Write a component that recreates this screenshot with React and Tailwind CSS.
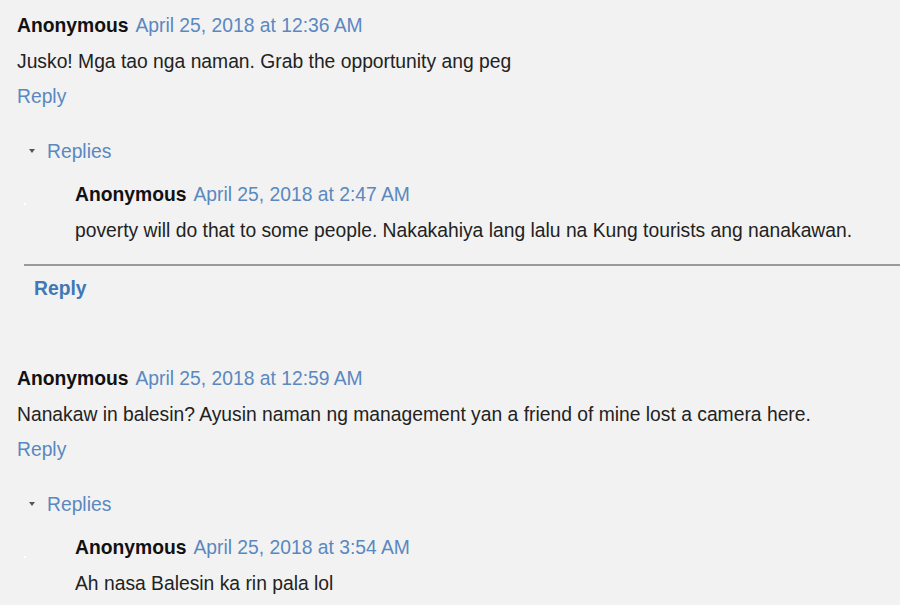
import React from 'react'

const Header = ({ date }) => (
  <div className="leading-[24px] whitespace-nowrap">
    <span className="font-bold text-[#111]">Anonymous</span>
    <span className="ml-[7px] text-[#5a88c0]">{date}</span>
  </div>
)

const Nested = ({ date, text }) => (
  <div className="mt-[19px] flex">
    <div className="w-[58px] pl-[7px] pt-[20px] shrink-0">
      <div className="w-[2px] h-[2px] bg-white"></div>
    </div>
    <div>
      <Header date={date} />
      <div className="mt-[12px] leading-[24px] text-[#222] whitespace-nowrap">{text}</div>
    </div>
  </div>
)

const Replies = () => (
  <div className="mt-[31px] ml-[12px] flex items-center leading-[24px]">
    <div className="w-0 h-0 border-l-[3.5px] border-r-[3.5px] border-t-[4px] border-l-transparent border-r-transparent border-t-[#555] mr-[12px] -mt-[3px]"></div>
    <span className="text-[#5a88c0]">Replies</span>
  </div>
)

const Thread = ({ date, text, nested }) => (
  <div>
    <Header date={date} />
    <div className="mt-[12px] leading-[24px] text-[#222] whitespace-nowrap">{text}</div>
    <div className="mt-[11px] leading-[24px] text-[#5a88c0]">Reply</div>
    <Replies />
    {nested}
  </div>
)

export default function App() {
  return (
    <div
      className="w-[900px] h-[605px] overflow-hidden bg-[#f2f2f2] pl-[17px] pt-[14px] text-[19.3px]"
      style={{ fontFamily: '"Liberation Sans", Arial, sans-serif' }}
    >
      <Thread
        date="April 25, 2018 at 12:36 AM"
        text="Jusko! Mga tao nga naman. Grab the opportunity ang peg"
        nested={
          <>
            <Nested
              date="April 25, 2018 at 2:47 AM"
              text="poverty will do that to some people. Nakakahiya lang lalu na Kung tourists ang nanakawan."
            />
            <div className="mt-[21px] ml-[7px] border-t-2 border-[#9a9a9a]"></div>
            <div className="mt-[11px] ml-[17px] leading-[24px] font-bold text-[#3f78b4]">Reply</div>
          </>
        }
      />
      <div className="mt-[66px]">
        <Thread
          date="April 25, 2018 at 12:59 AM"
          text="Nanakaw in balesin? Ayusin naman ng management yan a friend of mine lost a camera here."
          nested={
            <Nested date="April 25, 2018 at 3:54 AM" text="Ah nasa Balesin ka rin pala lol" />
          }
        />
      </div>
    </div>
  )
}
